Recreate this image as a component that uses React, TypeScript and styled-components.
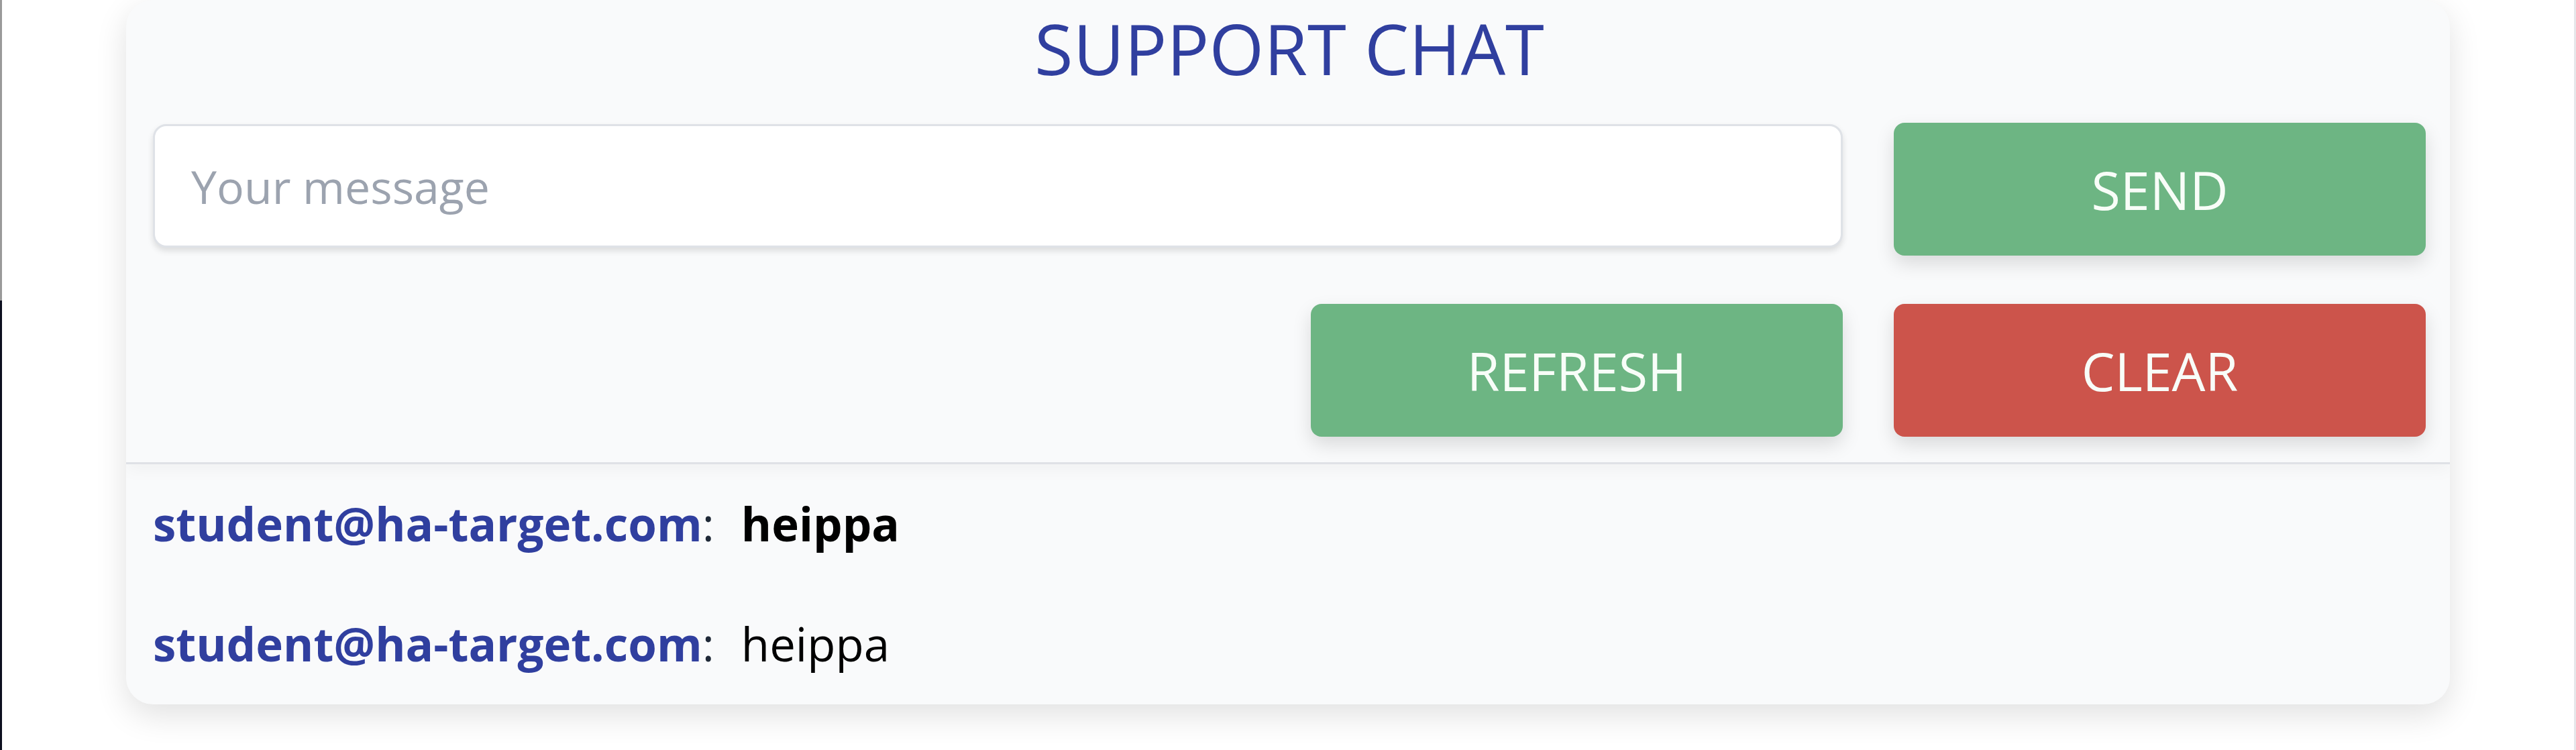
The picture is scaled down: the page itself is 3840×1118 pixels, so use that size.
import React, { useState } from 'react';
import styled, { createGlobalStyle } from 'styled-components';

const GlobalStyle = createGlobalStyle`
  html, body {
    margin: 0;
    padding: 0;
    background: #ffffff;
  }
  body {
    font-family: "Open Sans", "Noto Sans", sans-serif;
  }
`;

type Message = {
  id: number;
  user: string;
  text: string;
  highlight?: boolean;
};

const messages: Message[] = [
  { id: 1, user: 'student@ha-target.com', text: 'heippa', highlight: true },
  { id: 2, user: 'student@ha-target.com', text: 'heippa' },
];

const App: React.FC = () => {
  const [draft, setDraft] = useState('');

  return (
    <Page>
      <GlobalStyle />
      <Card>
        <Header>
          <Title>SUPPORT CHAT</Title>
          <Row>
            <MessageInput
              placeholder="Your message"
              value={draft}
              onChange={(e) => setDraft(e.target.value)}
            />
            <ActionButton $variant="green">SEND</ActionButton>
          </Row>
          <Row $end>
            <ActionButton $variant="green">REFRESH</ActionButton>
            <ActionButton $variant="red">CLEAR</ActionButton>
          </Row>
        </Header>
        <MessageList>
          {messages.map((m) => (
            <MessageRow key={m.id}>
              <User>{m.user}</User>
              <Colon>: </Colon>
              <Text $bold={m.highlight}>{m.text}</Text>
            </MessageRow>
          ))}
        </MessageList>
      </Card>
    </Page>
  );
};

const Page = styled.div`
  min-height: 1118px;
  box-sizing: border-box;
  background:
    linear-gradient(#9a9a9a, #9a9a9a) left top / 3px 448px no-repeat,
    linear-gradient(#0d1020, #0d1020) left 448px / 3px 100% no-repeat,
    linear-gradient(#e6e7ea, #e6e7ea) right top / 3px 100% no-repeat,
    #ffffff;
`;

const Card = styled.div`
  width: 3464px;
  margin: 0 auto;
  background: #f9fafb;
  border-radius: 40px;
  box-shadow: 0 16px 48px rgba(0, 0, 0, 0.12);
  overflow: hidden;
`;

const Header = styled.div`
  display: flex;
  flex-direction: column;
  gap: 72px;
  padding: 0 36px 38px 40px;
  border-bottom: 3px solid #dfe1e6;
  box-shadow: 0 8px 24px rgba(0, 0, 0, 0.04);
`;

const Title = styled.h1`
  margin: 0 0 -32px;
  text-align: center;
  font-size: 105px;
  font-weight: 400;
  line-height: 1.362;
  color: #303f9f;
`;

const Row = styled.div<{ $end?: boolean }>`
  display: flex;
  align-items: flex-start;
  justify-content: ${(p) => (p.$end ? 'flex-end' : 'flex-start')};
  gap: 76px;
`;

const MessageInput = styled.input`
  flex: 1;
  box-sizing: border-box;
  height: 184px;
  margin-top: 2px;
  padding: 0 54px;
  font-family: "Open Sans", "Noto Sans", sans-serif;
  font-size: 68px;
  color: #111827;
  background: #ffffff;
  border: 3px solid #dfe2e7;
  border-radius: 20px;
  box-shadow: 0 5px 10px rgba(0, 0, 0, 0.12);
  outline: none;

  &::placeholder {
    color: #9ca3af;
  }
`;

const ActionButton = styled.button<{ $variant: 'green' | 'red' }>`
  flex: none;
  width: 793px;
  height: 198px;
  border: none;
  border-radius: 16px;
  font-family: "Open Sans", "Noto Sans", sans-serif;
  font-size: 79px;
  font-weight: 400;
  color: #f8fdf8;
  background: ${(p) => (p.$variant === 'red' ? '#cc544b' : '#6db583')};
  box-shadow: 0 12px 28px rgba(0, 0, 0, 0.13);
  cursor: pointer;
`;

const MessageList = styled.div`
  display: flex;
  flex-direction: column;
`;

const MessageRow = styled.div`
  padding: 42px 40px 43px;
  font-size: 69px;
  line-height: 1.362;
  white-space: pre;
`;

const User = styled.span`
  font-weight: 700;
  color: #303f9f;
`;

const Colon = styled.span`
  color: #1f2937;
`;

const Text = styled.span<{ $bold?: boolean }>`
  margin-left: 22px;
  font-weight: ${(p) => (p.$bold ? 700 : 400)};
  color: #000000;
`;

export default App;
